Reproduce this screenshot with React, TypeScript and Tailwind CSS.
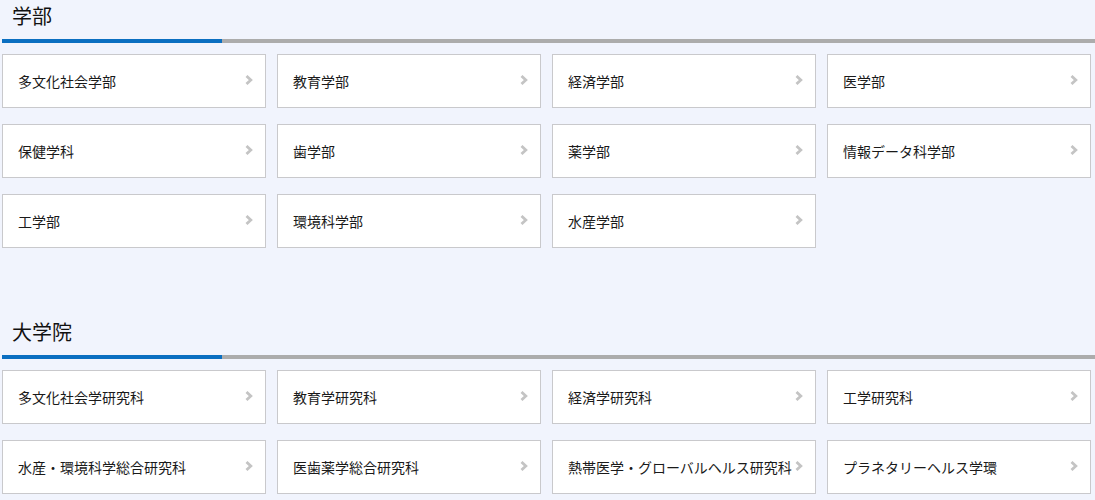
import React from "react";

const faculties = [
  "多文化社会学部",
  "教育学部",
  "経済学部",
  "医学部",
  "保健学科",
  "歯学部",
  "薬学部",
  "情報データ科学部",
  "工学部",
  "環境科学部",
  "水産学部",
];

const graduate = [
  "多文化社会学研究科",
  "教育学研究科",
  "経済学研究科",
  "工学研究科",
  "水産・環境科学総合研究科",
  "医歯薬学総合研究科",
  "熱帯医学・グローバルヘルス研究科",
  "プラネタリーヘルス学環",
];

function Chevron() {
  return (
    <svg width="8" height="10" viewBox="0 0 8 10" className="mb-[2px] shrink-0">
      <polyline points="1.5,1 5.8,5 1.5,9" fill="none" stroke="#c4c4c4" strokeWidth="2.8" />
    </svg>
  );
}

function Card({ label }: { label: string }) {
  return (
    <a className="flex h-[54px] items-center justify-between border border-[#c9c9cc] bg-white pl-[15px] pr-[12px] text-[14px] text-[#1a1a1a]">
      <span className="whitespace-nowrap">{label}</span>
      <Chevron />
    </a>
  );
}

function Section({ title, items }: { title: string; items: string[] }) {
  return (
    <section>
      <h2 className="h-[39px] pl-[10px] pt-[1px] text-[20px] leading-[30px] text-[#111]">{title}</h2>
      <div className="flex h-[4px] w-[1093px]">
        <div className="w-[220px] bg-[#0b6fc1]" />
        <div className="flex-1 bg-[#acacac]" />
      </div>
      <div className="mt-[11px] grid w-[1089px] grid-cols-4 gap-x-[11px] gap-y-[16px]">
        {items.map((it) => (
          <Card key={it} label={it} />
        ))}
      </div>
    </section>
  );
}

export default function App() {
  return (
    <div
      className="min-h-[500px] w-full bg-[#f1f4fd] pl-[2px]"
      style={{ fontFamily: '"Noto Sans CJK JP", "Noto Sans", sans-serif' }}
    >
      <Section title="学部" items={faculties} />
      <div className="h-[68px]" />
      <Section title="大学院" items={graduate} />
    </div>
  );
}
